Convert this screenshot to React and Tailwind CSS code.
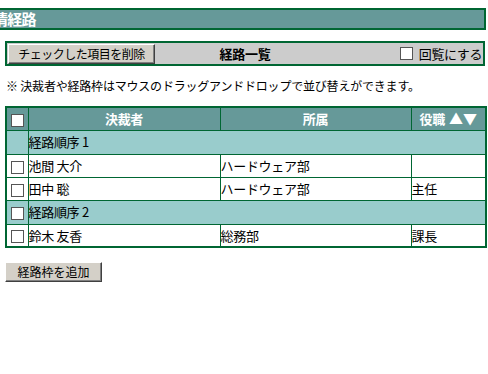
const font = { fontFamily: '"Noto Sans CJK JP", "Noto Sans", sans-serif' };

function Box({ className = '' }) {
  return <span className={`inline-block w-[13px] h-[13px] bg-white border border-[#555] align-middle ${className}`} />;
}

function Btn({ children, className = '' }) {
  return (
    <button
      className={`h-[20px] bg-[#d4d0c8] text-[12px] leading-none text-black border border-t-white border-l-white border-r-[#404040] border-b-[#404040] shadow-[inset_-1px_-1px_0_#808080] ${className}`}
    >
      {children}
    </button>
  );
}

const rows = [
  { type: 'group', label: '経路順序 1', check: false },
  { type: 'user', name: '池間 大介', dept: 'ハードウェア部', role: '' },
  { type: 'user', name: '田中 聡', dept: 'ハードウェア部', role: '主任' },
  { type: 'group', label: '経路順序 2', check: true },
  { type: 'user', name: '鈴木 友香', dept: '総務部', role: '課長' },
];

export default function App() {
  return (
    <div className="w-[488px] h-[374px] bg-white overflow-hidden text-black" style={font}>
      {/* title */}
      <div className="mt-[8px] w-[486px] h-[22px] bg-[#669999] border-y-2 border-r-2 border-[#006633] flex items-center overflow-hidden">
        <span className="ml-[-7px] text-[15px] font-bold text-white tracking-[-0.8px] whitespace-nowrap">情経路</span>
      </div>

      {/* toolbar */}
      <div className="ml-[5px] mt-[11px] w-[480px] h-[25px] bg-[#cccccc] border-2 border-[#006633] flex items-center relative">
        <Btn className="ml-[1px] w-[147px] tracking-[-0.5px]">チェックした項目を削除</Btn>
        <span className="absolute left-1/2 -translate-x-1/2 text-[13px] font-bold tracking-[-0.3px]">経路一覧</span>
        <label className="ml-auto flex items-center gap-[6px] text-[13px] tracking-[-0.4px] pr-[1px]">
          <Box />
          回覧にする
        </label>
      </div>

      {/* notice */}
      <p className="ml-[6px] mt-[12px] text-[12px] leading-[16px] tracking-[-0.2px] whitespace-nowrap">
        ※ 決裁者や経路枠はマウスのドラッグアンドドロップで並び替えができます。
      </p>

      {/* table */}
      <table className="ml-[5px] mt-[12px] w-[480px] border-collapse border-2 border-[#006633] text-[13px] tracking-[-0.3px] table-fixed">
        <colgroup>
          <col className="w-[22px]" />
          <col className="w-[192px]" />
          <col className="w-[191px]" />
          <col className="w-[75px]" />
        </colgroup>
        <thead>
          <tr className="h-[23px] bg-[#669999] text-white font-bold">
            <th className="border border-[#006633] text-center p-0"><Box className="border-[#333]" /></th>
            <th className="border border-[#006633] p-0">決裁者</th>
            <th className="border border-[#006633] p-0">所属</th>
            <th className="border border-[#006633] p-0 whitespace-nowrap">
              役職<span className="ml-[4px] text-[14px] tracking-[0px]">▲▼</span>
            </th>
          </tr>
        </thead>
        <tbody>
          {rows.map((r, i) =>
            r.type === 'group' ? (
              <tr key={i} className="h-[24px] bg-[#99cccc]">
                <td className="border border-[#006633] text-center p-0">{r.check && <Box />}</td>
                <td colSpan={3} className="border border-[#006633] p-0">{r.label}</td>
              </tr>
            ) : (
              <tr key={i} className="h-[23px] bg-white">
                <td className="border border-[#006633] text-center p-0"><Box /></td>
                <td className="border border-[#006633] p-0">{r.name}</td>
                <td className="border border-[#006633] p-0">{r.dept}</td>
                <td className="border border-[#006633] p-0">{r.role}</td>
              </tr>
            )
          )}
        </tbody>
      </table>

      <Btn className="ml-[5px] mt-[14px] w-[97px] tracking-[0px]">経路枠を追加</Btn>
    </div>
  );
}
